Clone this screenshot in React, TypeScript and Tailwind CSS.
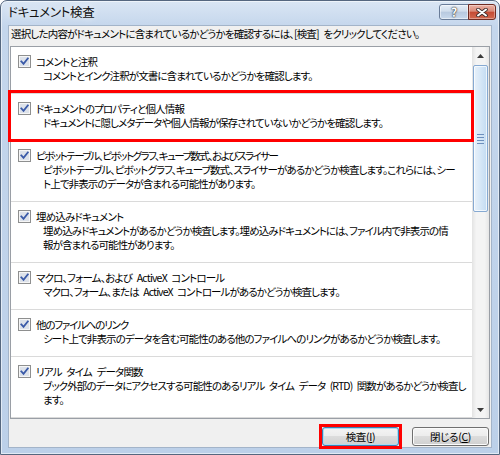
import React from "react";

const Checkbox = () => (
  <svg width="13" height="13" viewBox="0 0 13 13" className="shrink-0">
    <rect x="0.5" y="0.5" width="12" height="12" fill="#f6f6f6" stroke="#8e8f8f" />
    <rect x="2" y="2" width="9" height="9" fill="#dde2ea" />
    <path d="M3.3 6.4 L5.5 8.8 L9.8 3.4" fill="none" stroke="#3a5aa8" strokeWidth="1.8" strokeLinecap="square" />
  </svg>
);

type ItemProps = { title: string; lines: string[]; titleClass: string };

const Item = ({ title, lines, titleClass }: ItemProps) => (
  <div className="pt-[7px] pb-[10px] pl-[7px] border-b border-[#dadada]">
    <div className="flex items-center h-[15px]">
      <Checkbox />
      <span className={titleClass}>{title}</span>
    </div>
    <div className="pl-[25px] leading-[14px] tracking-[-0.9px] [word-spacing:3px]">
      {lines.map((l, i) => (
        <div key={i} className="whitespace-nowrap">
          {l}
        </div>
      ))}
    </div>
  </div>
);

const T = "ml-[5px] leading-[15px] whitespace-nowrap tracking-[-0.8px] [word-spacing:3px]";

const items: ItemProps[] = [
  { title: "コメントと注釈", titleClass: T, lines: ["コメントとインク注釈が文書に含まれているかどうかを確認します。"] },
  {
    title: "ドキュメントのプロパティと個人情報",
    titleClass: T,
    lines: ["ドキュメントに隠しメタデータや個人情報が保存されていないかどうかを確認します。"],
  },
  {
    title: "ピボットテーブル、ピボットグラフ、キューブ数式、およびスライサー",
    titleClass: "ml-[5px] leading-[15px] whitespace-nowrap tracking-[-1.5px]",
    lines: [
      "ピボットテーブル、ピボットグラフ、キューブ数式、スライサーがあるかどうか検査します。これらには、シー",
      "ト上で非表示のデータが含まれる可能性があります。",
    ],
  },
  {
    title: "埋め込みドキュメント",
    titleClass: T,
    lines: [
      "埋め込みドキュメントがあるかどうか検査します。埋め込みドキュメントには、ファイル内で非表示の情",
      "報が含まれる可能性があります。",
    ],
  },
  {
    title: "マクロ、フォーム、および ActiveX コントロール",
    titleClass: T,
    lines: ["マクロ、フォーム、または ActiveX コントロールがあるかどうか検査します。"],
  },
  {
    title: "他のファイルへのリンク",
    titleClass: "ml-[5px] leading-[15px] whitespace-nowrap tracking-[-1.2px]",
    lines: ["シート上で非表示のデータを含む可能性のある他のファイルへのリンクがあるかどうか検査します。"],
  },
  {
    title: "リアル タイム データ関数",
    titleClass: T,
    lines: ["ブック外部のデータにアクセスする可能性のあるリアル タイム データ (RTD) 関数があるかどうか検査し", "ます。"],
  },
];

const Scrollbar = () => (
  <div className="w-[17px] shrink-0 flex flex-col bg-[linear-gradient(to_right,#e3e3e3,#f4f4f4_25%,#f4f4f4_75%,#e6e6e6)]">
    <div className="h-[17px] flex items-center justify-center">
      <svg width="7" height="4" viewBox="0 0 7 4">
        <path d="M0 4 L3.5 0 L7 4 Z" fill="#3a3a3a" />
      </svg>
    </div>
    <div className="mt-[1px] mx-[1px] h-[147px] rounded-[2px] border border-[#86a9d2] bg-[linear-gradient(to_right,#e8f1fa,#d6e7f7_50%,#c3dbf2)] shadow-[inset_0_0_0_1px_rgba(255,255,255,0.7)] flex flex-col items-center justify-center gap-[2px]">
      <div className="w-[7px] h-[1px] bg-[#6d8fbd]" />
      <div className="w-[7px] h-[1px] bg-[#6d8fbd]" />
      <div className="w-[7px] h-[1px] bg-[#6d8fbd]" />
      <div className="w-[7px] h-[1px] bg-[#6d8fbd]" />
    </div>
    <div className="flex-1" />
    <div className="h-[17px] flex items-center justify-center">
      <svg width="7" height="4" viewBox="0 0 7 4">
        <path d="M0 0 L7 0 L3.5 4 Z" fill="#3a3a3a" />
      </svg>
    </div>
  </div>
);

const Button = ({ label, mnemonic, def }: { label: string; mnemonic: string; def?: boolean }) => (
  <div
    className={
      def
        ? "w-[77px] h-[19px] rounded-[3px] border border-[#3c7fb1] bg-[linear-gradient(to_bottom,#f4f4f4,#ececec_50%,#dcdcdc_50%,#d0d0d0)] shadow-[inset_0_0_0_1px_#a9dcf4] flex items-center justify-center leading-[14px]"
        : "w-[77px] h-[19px] rounded-[3px] border border-[#707070] bg-[linear-gradient(to_bottom,#f4f4f4,#ececec_50%,#dcdcdc_50%,#d0d0d0)] shadow-[inset_0_0_0_1px_#fbfbfb] flex items-center justify-center leading-[14px]"
    }
  >
    <span className="whitespace-nowrap tracking-[-0.3px]">
      {label}(<span className="underline">{mnemonic}</span>)
    </span>
  </div>
);

export default function App() {
  return (
    <div className="w-[500px] h-[455px] bg-white font-['Noto_Sans_CJK_JP','Noto_Sans',sans-serif] [font-feature-settings:'palt'] text-[10.5px] text-black">
      <div className="w-[500px] h-[455px] flex flex-col rounded-t-[7px] border border-[#55677f] bg-[linear-gradient(to_bottom,#dae6f4,#c4d6ec_26px,#bcd0e9)] shadow-[inset_0_0_0_1px_rgba(255,255,255,0.55)] px-[7px] pb-[6px]">
        {/* title bar */}
        <div className="h-[24px] shrink-0 flex items-start justify-between">
          <div className="mt-[3px] text-[12.5px] leading-[16px] text-[#111] whitespace-nowrap tracking-[-0.3px] [text-shadow:0_0_6px_rgba(255,255,255,0.9)]">
            ドキュメント検査
          </div>
          <div className="mt-[3px] -mr-[4px] flex h-[16px]">
            <div className="w-[30px] h-[16px] rounded-l-[3px] border border-[#697c98] bg-[linear-gradient(to_bottom,#e6eef7,#d0ddec_45%,#b7c9df_50%,#c9d9ec)] shadow-[inset_0_0_0_1px_rgba(255,255,255,0.5)] flex items-center justify-center">
              <span className="text-[12px] font-bold leading-[12px] text-white [text-shadow:0_0_1px_#222,0_0_2px_#222]">?</span>
            </div>
            <div className="w-[28px] h-[16px] -ml-px rounded-r-[3px] border border-[#6f2b21] bg-[linear-gradient(to_bottom,#ebb2a5,#d98a78_45%,#c44a33_50%,#d2694f)] shadow-[inset_0_0_0_1px_rgba(255,255,255,0.35)] flex items-center justify-center">
              <svg width="12" height="9" viewBox="0 0 12 9">
                <path d="M2 1.5 L10 7.5 M10 1.5 L2 7.5" stroke="#3a2a28" strokeWidth="3.6" strokeLinecap="round" />
                <path d="M2 1.5 L10 7.5 M10 1.5 L2 7.5" stroke="#ffffff" strokeWidth="2" strokeLinecap="round" />
              </svg>
            </div>
          </div>
        </div>

        {/* client area */}
        <div className="flex-1 flex flex-col border border-[#a3b4c9] bg-[#f0f0f0] px-[1px]">
          <div className="pt-[1px] pl-[1px] h-[15px] leading-[14px] whitespace-nowrap tracking-[-0.8px] [word-spacing:3px]">
            選択した内容がドキュメントに含まれているかどうかを確認するには、[検査] をクリックしてください。
          </div>
          <div className="relative mt-[5px] h-[373px] flex border border-[#9a9fa6] bg-white">
            <div className="flex-1 overflow-hidden">
              {items.map((it, i) => (
                <Item key={i} {...it} />
              ))}
            </div>
            <Scrollbar />
            <div className="absolute top-[43px] left-[-3px] w-[466px] h-[52px] border-[3px] border-[#ff0000] pointer-events-none" />
          </div>
          <div className="mt-[8px] flex justify-end gap-[13px] pr-[1px]">
            <div className="relative">
              <Button label="検査" mnemonic="I" def />
              <div className="absolute -inset-[3px] border-[3px] border-[#ff0000] pointer-events-none" />
            </div>
            <Button label="閉じる" mnemonic="C" />
          </div>
        </div>
      </div>
    </div>
  );
}
